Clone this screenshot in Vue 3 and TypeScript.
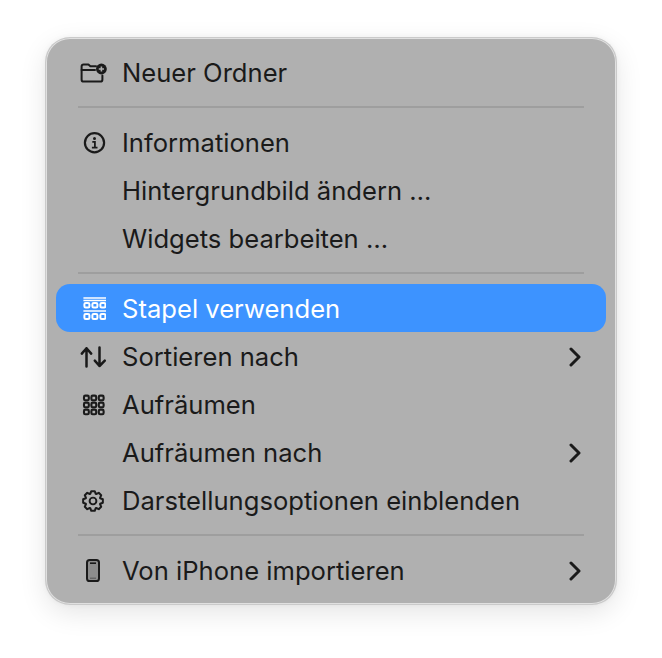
<script setup lang="ts">
type Item = { label?: string; icon?: string; sub?: boolean; active?: boolean; sep?: boolean };
const items: Item[] = [
  { label: 'Neuer Ordner', icon: 'folder' },
  { sep: true },
  { label: 'Informationen', icon: 'info' },
  { label: 'Hintergrundbild ändern …' },
  { label: 'Widgets bearbeiten …' },
  { sep: true },
  { label: 'Stapel verwenden', icon: 'stacks', active: true },
  { label: 'Sortieren nach', icon: 'sort', sub: true },
  { label: 'Aufräumen', icon: 'grid' },
  { label: 'Aufräumen nach', sub: true },
  { label: 'Darstellungsoptionen einblenden', icon: 'gear' },
  { sep: true },
  { label: 'Von iPhone importieren', icon: 'phone', sub: true },
];
const cells = [0, 1, 2];

function gearPath(): string {
  const teeth = 8;
  const out = 10;
  const inn = 7.7;
  const pts: string[] = [];
  for (let i = 0; i < teeth; i++) {
    const a = (i * 2 * Math.PI) / teeth - Math.PI / 2;
    const step = (2 * Math.PI) / teeth;
    const offs: [number, number][] = [
      [-0.5, inn],
      [-0.24, out],
      [0.24, out],
      [0.5, inn],
    ];
    for (const [f, r] of offs) {
      const t = a + f * step * 0.92;
      pts.push(`${(r * Math.cos(t)).toFixed(2)} ${(r * Math.sin(t)).toFixed(2)}`);
    }
  }
  return 'M' + pts.join('L') + 'Z';
}
const gear = gearPath();
</script>

<template>
  <div class="page">
    <div class="menu">
      <template v-for="(it, i) in items" :key="i">
        <div v-if="it.sep" class="sep"><span></span></div>
        <div v-else class="row" :class="{ active: it.active }">
          <span class="icon">
            <svg v-if="it.icon === 'folder'" width="28" height="20" viewBox="0 0 28 20" fill="none" stroke="currentColor" stroke-width="2" stroke-linecap="round" stroke-linejoin="round">
              <path d="M16 3.2H10.4L8.4 1.5H3.6Q1.6 1.5 1.6 3.5V16.4Q1.6 18.6 3.8 18.6H20.2Q22.4 18.6 22.4 16.4V12.6" />
              <path d="M1.6 7H15" />
              <circle cx="21.4" cy="6" r="5.4" fill="currentColor" stroke="none" />
              <path d="M21.4 3.4V8.6M18.8 6H24" stroke="#b0b0b0" stroke-width="1.6" stroke-linecap="butt" />
            </svg>
            <svg v-else-if="it.icon === 'info'" width="24" height="24" viewBox="-0.5 0 24 24" fill="none" stroke="currentColor" stroke-width="2.2">
              <circle cx="12" cy="11.8" r="9.6" />
              <circle cx="12" cy="7.6" r="1.5" fill="currentColor" stroke="none" />
              <path d="M9.8 10.9H12.4V16.4M9.4 16.6H15" stroke-width="1.8" />
            </svg>
            <svg v-else-if="it.icon === 'stacks'" width="24" height="24" viewBox="0 0 24 24" fill="none" stroke="currentColor" stroke-width="2">
              <path d="M1.4 1H24M1.4 3.4H24M1.4 14H24" stroke-width="1.5" />
              <g v-for="c in cells" :key="c">
                <rect :x="2.4 + c * 8" y="6" width="5" height="4.6" rx="1.3" />
                <rect :x="2.4 + c * 8" y="17" width="5" height="5" rx="1.3" />
              </g>
            </svg>
            <svg v-else-if="it.icon === 'sort'" width="28" height="24" viewBox="0 0 28 24" fill="none" stroke="currentColor" stroke-width="2.5" stroke-linecap="round" stroke-linejoin="round">
              <path d="M6.5 21.6V3.2M1.8 8.6L6.5 3.2L11.2 8.6" />
              <path d="M19.5 2.6V21M14.8 15.6L19.5 21L24.8 15.6" />
            </svg>
            <svg v-else-if="it.icon === 'grid'" width="24" height="24" viewBox="0 0 24 24" fill="none" stroke="currentColor" stroke-width="2.1">
              <g v-for="r in cells" :key="r">
                <rect v-for="c in cells" :key="c" :x="2 + c * 7.4" :y="2.6 + r * 7" width="4.8" height="4.6" rx="1.3" />
              </g>
            </svg>
            <svg v-else-if="it.icon === 'gear'" width="24" height="24" viewBox="-11 -12 24 24" fill="none" stroke="currentColor" stroke-width="2" stroke-linejoin="round">
              <path :d="gear" />
              <circle cx="0" cy="0" r="3.4" stroke-width="1.9" />
            </svg>
            <svg v-else-if="it.icon === 'phone'" width="16" height="24" viewBox="0 0 16 24" fill="none">
              <rect x="1" y="1" width="12" height="21" rx="2.6" fill="#8c8c8c" stroke="currentColor" stroke-width="2" />
              <rect x="4" y="3.4" width="6" height="1.6" fill="currentColor" />
              <rect x="4" y="18.6" width="6" height="1.2" fill="#5c5c5c" />
            </svg>
          </span>
          <span class="label">{{ it.label }}</span>
          <svg v-if="it.sub" class="chev" width="14" height="20" viewBox="0 0 14 20" fill="none" stroke="currentColor" stroke-width="3" stroke-linecap="round" stroke-linejoin="round">
            <path d="M2 2L10 10L2 18" />
          </svg>
        </div>
      </template>
    </div>
  </div>
</template>

<style>
html, body { margin: 0; background: #fff; }
</style>

<style scoped>
.page {
  width: 662px;
  height: 658px;
  box-sizing: border-box;
  padding: 38px 46px 54px;
  font-family: Inter, "Liberation Sans", sans-serif;
  overflow: hidden;
}
.menu {
  width: 570px;
  height: 566px;
  box-sizing: border-box;
  padding: 11px 10px 9px;
  background: #b0b0b0;
  border-radius: 24px;
  box-shadow: 0 0 0 1px #e0e0e0 inset, 0 0 0 1px #cacaca, 0 8px 28px rgba(0, 0, 0, 0.11), 0 0 6px rgba(0, 0, 0, 0.06);
}
.row {
  height: 48px;
  box-sizing: border-box;
  display: flex;
  align-items: center;
  padding: 0 23px 0 10px;
  border-radius: 14px;
  color: #1a1a1a;
  font-size: 25.6px;
}
.row.active {
  background: #3d93ff;
  color: #fff;
  margin: -1px 0 1px;
  padding-top: 2px;
}
.icon {
  width: 56px;
  height: 24px;
  display: flex;
  align-items: center;
  justify-content: center;
  flex: none;
}
.label {
  flex: 1;
  white-space: nowrap;
  margin-top: -2px;
}
.chev { flex: none; }
.sep {
  height: 22px;
  box-sizing: border-box;
  display: flex;
  align-items: center;
  padding: 0 22px 2px;
}
.sep span {
  display: block;
  width: 100%;
  height: 2px;
  background: #9e9e9e;
}
</style>
